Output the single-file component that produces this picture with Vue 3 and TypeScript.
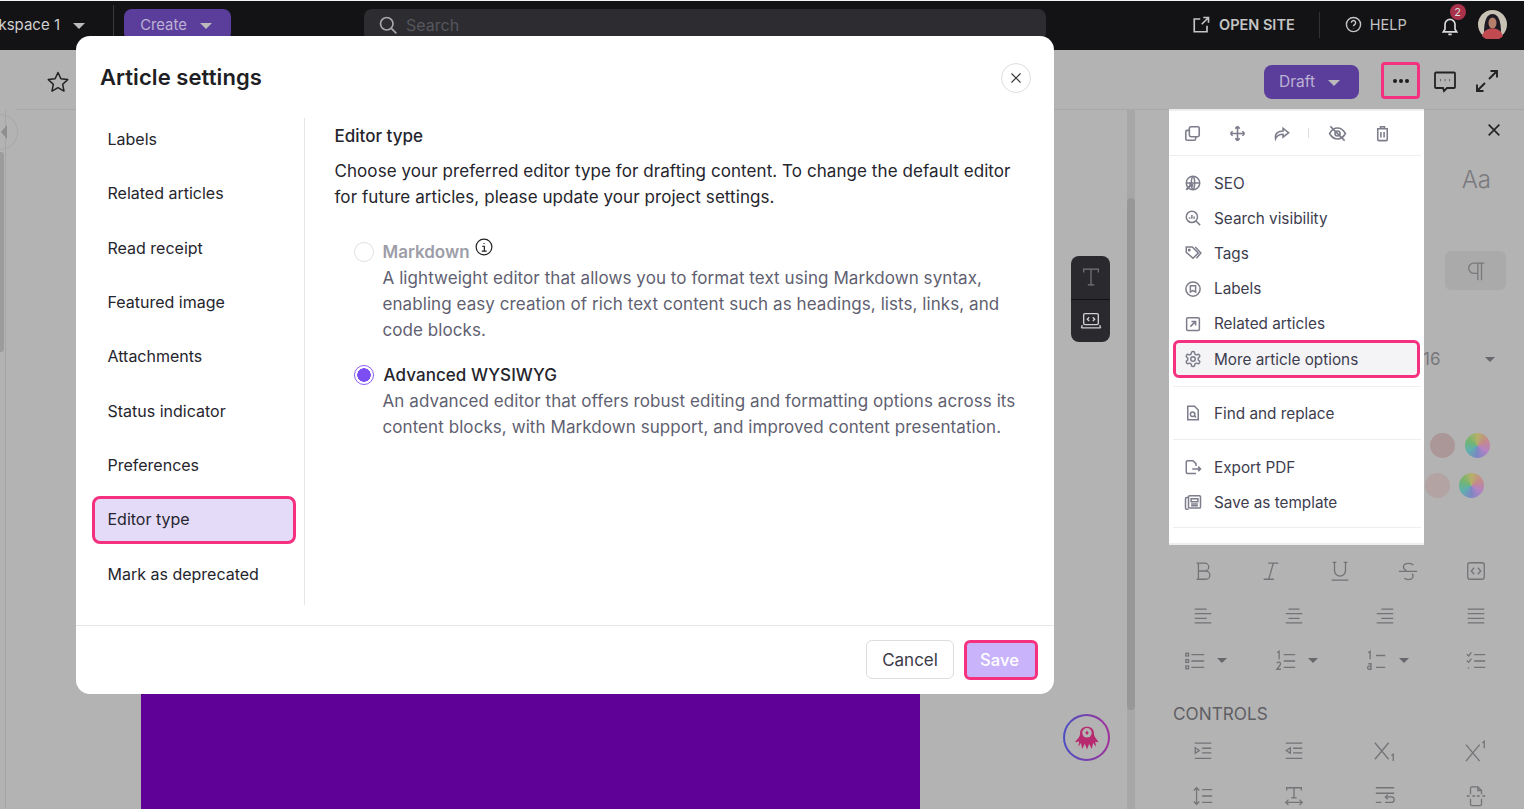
<script setup lang="ts">
const icons: Record<string, string> = {
  copy: '<rect x="8" y="3.5" width="12.5" height="12.5" rx="2"/><path d="M8 8H5.5a2 2 0 0 0-2 2v8.500a2 2 0 0 0 2 2H14a2 2 0 0 0 2-2V16"/>',
  move: '<path d="M12 3v18M3 12h18M12 3 9.200 5.800M12 3l2.800 2.800M12 21l-2.800-2.800M12 21l2.800-2.800M3 12l2.800-2.800M3 12l2.800 2.800M21 12l-2.800-2.800M21 12l-2.800 2.800"/>',
  share: '<path d="M14 5.500 21 11l-7 5.500V13c-4.500 0-7.500 1-9.500 5.500C3.500 12 7.500 8.800 14 8.800z"/>',
  eyeoff: '<path d="M2 12s4-7 10-7 10 7 10 7-4 7-10 7-10-7-10-7z"/><circle cx="12" cy="12" r="3.200"/><path d="M3 3l18 18"/>',
  trash: '<path d="M5 6h14M9.500 6V3.500h5V6M6 6v13.500a1.500 1.500 0 0 0 1.500 1.500h9a1.500 1.500 0 0 0 1.500-1.500V6M10 10v7M14 10v7"/>',
  globe: '<circle cx="12" cy="12" r="9"/><path d="M3 12h18M12 3c-3 3-3 15 0 18M12 3c3 3 3 15 0 18"/><path d="M3 21l8-8M11 13h-4M11 13v4" stroke-width="2.800"/>',
  visibility: '<circle cx="10.500" cy="10.500" r="7.500"/><path d="M16 16l5.500 5.500M7.500 13v-2M10.500 13V8M13.500 13v-3"/>',
  tag: '<path d="M3 4h8l8 8-7 7-9-8z"/><path d="M15 4l7.500 8-6 7"/><circle cx="7" cy="8" r="1"/>',
  label: '<circle cx="12" cy="12" r="9.500"/><path d="M8.500 7.500h7V16L12 14l-3.500 2z"/>',
  related: '<rect x="3.500" y="3.500" width="17" height="17" rx="1.500"/><path d="M8.500 15.500l7-7M10 8.500h5.500V14"/>',
  gear: '<path d="M12.220 2h-.44a2 2 0 0 0-2 2v.18a2 2 0 0 1-1 1.730l-.43.25a2 2 0 0 1-2 0l-.15-.08a2 2 0 0 0-2.730.73l-.22.38a2 2 0 0 0 .73 2.730l.15.1a2 2 0 0 1 1 1.720v.51a2 2 0 0 1-1 1.740l-.15.09a2 2 0 0 0-.73 2.730l.22.38a2 2 0 0 0 2.730.73l.15-.08a2 2 0 0 1 2 0l.43.25a2 2 0 0 1 1 1.730V20a2 2 0 0 0 2 2h.44a2 2 0 0 0 2-2v-.18a2 2 0 0 1 1-1.730l.43-.25a2 2 0 0 1 2 0l.15.08a2 2 0 0 0 2.730-.73l.22-.39a2 2 0 0 0-.73-2.730l-.15-.08a2 2 0 0 1-1-1.740v-.5a2 2 0 0 1 1-1.740l.15-.09a2 2 0 0 0 .73-2.730l-.22-.38a2 2 0 0 0-2.730-.73l-.15.08a2 2 0 0 1-2 0l-.43-.25a2 2 0 0 1-1-1.730V4a2 2 0 0 0-2-2z"/><circle cx="12" cy="12" r="3"/>',
  find: '<path d="M5 3h9l5 5v13H5z"/><circle cx="11.500" cy="13.500" r="3"/><path d="M13.500 15.500 16 18"/>',
  exportpdf: '<path d="M16 20.500H5a2 2 0 0 1-2-2v-13a2 2 0 0 1 2-2h7l4 4v3"/><path d="M11 14.500h11M19 11.500l3 3-3 3"/>',
  template: '<rect x="6" y="3.500" width="16" height="16.500" rx="1.500"/><path d="M6 6H3.500a1.500 1.500 0 0 0-1.500 1.500V20a1.500 1.500 0 0 0 1.500 1.500H6M9.500 7.500h9v4h-9zM9.500 14.500h9M9.500 17h9"/>',
  bold: '<path d="M5 3.500h9a4.200 4.200 0 0 1 0 8.500H7h8a4.500 4.500 0 0 1 0 9H5M7 3.500V21"/>',
  italic: '<path d="M9 3.500h11M4 21h11M14.500 3.500 9.500 21"/>',
  underline: '<path d="M4 2.500h4M16 2.500h4M6 2.500v9a6 6 0 0 0 12 0v-9M3 22h18"/>',
  strike: '<path d="M2 12.500h20M18 5.500C16 3 8 2.500 7 7c-.3 2 1 3.500 3.500 5M8 20c2.500 2 9 2 9.500-2 .1-1-.2-2-1-3"/>',
  codebox: '<rect x="3" y="3" width="18" height="18" rx="2.500"/><path d="M10 8.500 6.800 12l3.200 3.500M14 8.500l3.200 3.500-3.200 3.500"/>',
  left: '<path d="M3 4.500h13M3 9.500h18M3 14.500h13M3 19.500h18"/>',
  center: '<path d="M6 4.500h12M3 9.500h18M6 14.500h12M3 19.500h18"/>',
  right: '<path d="M8 4.500h13M3 9.500h18M8 14.500h13M3 19.500h18"/>',
  justify: '<path d="M3 4.500h18M3 9.500h18M3 14.500h18M3 19.500h18"/>',
  bullets: '<rect x="2" y="3.500" width="3" height="3"/><rect x="2" y="10.500" width="3" height="3"/><rect x="2" y="17.500" width="3" height="3"/><path d="M8 5h14M8 12h14M8 19h14"/>',
  numbers: '<path d="M2.500 3 4.500 1.500v8.500M2 14.500c1-2 4.500-1.500 4 1-.3 1.500-2.500 3-4 5.500h4.500M9.500 5h12.500M9.500 12h12.500M9.500 19h12.500"/>',
  alpha: '<path d="M2.500 3 4.500 1.500v8.500M11 6h10M2.500 15h3v6h-2a1.500 1.500 0 0 1 0-3.500h2M11 19h10"/>',
  checks: '<path d="M2 4.500l2 2 3-4M2 11.500l2 2 3-4M3 19.500h1.500M10 5h12M10 12h12M10 19h12"/>',
  indent: '<path d="M3 3.500h18M11 9h10M11 14h10M3 20h18M3.500 8.500 8 11.500l-4.500 3z"/>',
  outdent: '<path d="M3 3.500h18M11 9h10M11 14h10M3 20h18M8 8.500 3.500 11.500 8 14.500z"/>',
  sub: '<path d="M1 3l15 18M16 3 1 21M19 17l2-1.500V23"/>',
  sup: '<path d="M1 5l15 18M16 5 1 23M19 3l2-1.500V9"/>',
  lineheight: '<path d="M5 3v18M2 6l3-3 3 3M2 18l3 3 3-3M11 5h11M11 12h11M11 19h11"/>',
  textwidth: '<path d="M4 6V3h16v3M12 3v11M9 14h6M3 19h18M6 16l-3 3 3 3M18 16l3 3-3 3"/>',
  wrap: '<path d="M2 3h20M2 9h20M2 19h6M12 19h7a3 3 0 0 0 0-6h-6M15 10.500 12.500 13l2.500 2.500"/>',
  pagebreak: '<path d="M6 10V3.500a1.500 1.500 0 0 1 1.500-1.500H14l4 4v4M14 2v4h4M2 12h3M8 12h3M13 12h3M19 12h3M6 15v6a1.500 1.500 0 0 0 1.500 1.500h9A1.500 1.500 0 0 0 18 21v-6"/>',
}

const navItems = [
  'Labels',
  'Related articles',
  'Read receipt',
  'Featured image',
  'Attachments',
  'Status indicator',
  'Preferences',
  'Editor type',
  'Mark as deprecated',
]

const menuGroups = [
  [
    { icon: 'globe', text: 'SEO' },
    { icon: 'visibility', text: 'Search visibility' },
    { icon: 'tag', text: 'Tags' },
    { icon: 'label', text: 'Labels' },
    { icon: 'related', text: 'Related articles' },
    { icon: 'gear', text: 'More article options', active: true },
  ],
  [{ icon: 'find', text: 'Find and replace' }],
  [
    { icon: 'exportpdf', text: 'Export PDF' },
    { icon: 'template', text: 'Save as template' },
  ],
]

const formatRow = ['bold', 'italic', 'underline', 'strike', 'codebox']
const alignRow = ['left', 'center', 'right', 'justify']
const listRow = [
  { icon: 'bullets', caret: true },
  { icon: 'numbers', caret: true },
  { icon: 'alpha', caret: true },
  { icon: 'checks', caret: false },
]
const controlsRow = ['indent', 'outdent', 'sub', 'sup']
const lastRow = ['lineheight', 'textwidth', 'wrap', 'pagebreak']
</script>

<template>
  <div class="app">
    <header class="topbar">
      <div class="workspace">
        <span>Workspace 1</span>
        <i class="caret light"></i>
      </div>
      <button class="create">Create <i class="caret light"></i></button>
      <div class="search">
        <svg width="20" height="20" viewBox="0 0 24 24" fill="none" stroke="#a8a8a8" stroke-width="2"><circle cx="10.5" cy="10.5" r="7.5"/><path d="M16 16l6 6"/></svg>
        <span>Search</span>
      </div>
      <a class="open-site">
        <svg width="18" height="18" viewBox="0 0 24 24" fill="none" stroke="#c4c4c4" stroke-width="2.2"><path d="M20 13v8H3V4h8M13 11 22 2M15 2h7v7"/></svg>
        OPEN SITE
      </a>
      <span class="bar-divider"></span>
      <a class="help">
        <svg width="17" height="17" viewBox="0 0 24 24" fill="none" stroke="#c4c4c4" stroke-width="2"><circle cx="12" cy="12" r="10"/><path d="M9 9.5a3 3 0 1 1 4.500 2.600c-1 .6-1.500 1.200-1.500 2.400M12 17.500v.5"/></svg>
        HELP
      </a>
      <div class="bell">
        <svg width="20" height="20" viewBox="0 0 24 24" fill="none" stroke="#dadada" stroke-width="2"><path d="M6 16V10a6 6 0 0 1 12 0v6l2 3H4zM10 22h4"/></svg>
        <span class="badge">2</span>
      </div>
      <svg class="avatar" width="29" height="29" viewBox="0 0 29 29">
        <circle cx="14.5" cy="14.5" r="14.5" fill="#c8c2b4"/>
        <path d="M6 23C6 10 9 4 14.500 4S23 10 23 23z" fill="#1d1a24"/>
        <ellipse cx="14.5" cy="13" rx="4" ry="5.5" fill="#b4806c"/>
        <path d="M4 26c2-6 6-7.500 10.500-7.500S23 20 25 26a14.500 14.500 0 0 1-21 0z" fill="#c04a50"/>
      </svg>
    </header>

    <div class="subbar">
      <svg class="star" width="24" height="24" viewBox="0 0 24 24" fill="none" stroke="#222" stroke-width="1.5" stroke-linejoin="round"><path d="M12 2.500l2.900 6.300 6.800.8-5 4.700 1.300 6.800-6-3.400-6 3.400 1.300-6.800-5-4.700 6.800-.8z"/></svg>
      <button class="draft">Draft <i class="caret light"></i></button>
      <button class="dots"><i></i><i></i><i></i></button>
      <svg class="comment" width="24" height="24" viewBox="0 0 24 24" fill="none" stroke="#222" stroke-width="1.8"><path d="M3 3.500h18a1 1 0 0 1 1 1V18a1 1 0 0 1-1 1h-7l-3 3-1-3H3a1 1 0 0 1-1-1V4.500a1 1 0 0 1 1-1z"/><path d="M7.500 11.200h.5M11.800 11.200h.5M16 11.200h.5" stroke-width="2.2"/></svg>
      <svg class="expand" width="24" height="24" viewBox="0 0 24 24" fill="none" stroke="#222" stroke-width="1.9"><path d="M14 10 22 2M15.500 2H22v6.500M10 14l-8 8M2 15.500V22h6.500"/></svg>
    </div>

    <div class="workarea">
      <div class="rail"><span class="rail-thumb"></span></div>
      <main class="canvas">
        <div class="hero"></div>
      </main>
      <div class="scrollbar"><span></span></div>
      <aside class="panel">
        <svg class="panel-close" width="16" height="16" viewBox="0 0 24 24" fill="none" stroke="#222" stroke-width="2.4"><path d="M4 4l16 16M20 4 4 20"/></svg>
        <div class="aa">Aa</div>
        <div class="pilcrow">
          <svg width="22" height="22" viewBox="0 0 24 24" fill="none" stroke="#77777c" stroke-width="1.4"><path d="M14 3.500V22M18 3.500V22M21 3.500H9.500a5.500 5.500 0 0 0 0 11H14"/></svg>
        </div>
        <div class="size-row"><span>16</span><i class="caret dark"></i></div>
        <div class="swatches first"><i class="dot-a"></i><i class="wheel"></i></div>
        <div class="swatches second"><i class="dot-b"></i><i class="wheel"></i></div>

        <div class="tools five first-tools">
          <svg v-for="name in formatRow" :key="name" class="tool" viewBox="0 0 24 24" v-html="icons[name]"></svg>
        </div>
        <div class="tools four">
          <svg v-for="name in alignRow" :key="name" class="tool" viewBox="0 0 24 24" v-html="icons[name]"></svg>
        </div>
        <div class="tools four">
          <div v-for="item in listRow" :key="item.icon" class="tool-cell" :class="{ 'with-caret': item.caret }">
            <svg class="tool" viewBox="0 0 24 24" v-html="icons[item.icon]"></svg>
            <i v-if="item.caret" class="caret dark"></i>
          </div>
        </div>
        <div class="controls-label">CONTROLS</div>
        <div class="tools four">
          <svg v-for="name in controlsRow" :key="name" class="tool" viewBox="0 0 24 24" v-html="icons[name]"></svg>
        </div>
        <div class="tools four">
          <svg v-for="name in lastRow" :key="name" class="tool" viewBox="0 0 24 24" v-html="icons[name]"></svg>
        </div>
      </aside>
    </div>

    <!-- things floating over the editor -->
    <span class="collapse"></span>
    <div class="float-tools">
      <button>
        <svg width="22" height="22" viewBox="0 0 24 24" fill="none" stroke="#77777c" stroke-width="1.3"><path d="M4 7V3.500h16V7M12 3.500V20.500M8.500 20.500h7"/></svg>
      </button>
      <button>
        <svg width="22" height="22" viewBox="0 0 24 24" fill="none" stroke="#cfcfcf" stroke-width="1.5"><rect x="4" y="4" width="16" height="12" rx="1.5"/><path d="M1.500 19.500h21M2.500 16.500 1.500 19.500M21.500 16.500l1 3M10 8 8 10l2 2M14 8l2 2-2 2"/></svg>
      </button>
    </div>
    <div class="bot">
      <svg width="26" height="26" viewBox="0 0 30 30" fill="#b72a70">
        <path d="M15 2c5 0 8 3 8 7.500 0 2 .5 3.500 1.500 5l4 5.500-4-.8 1 6-3.500-4.500-1.500 7-3-6-2.500 6.500-2.500-6.500-3 6-1.500-7L5 25l1-6-5 1 4.500-5.500C6.500 13 7 11.500 7 9.500 7 5 10 2 15 2z"/>
        <circle cx="15" cy="9" r="5.500" fill="#b3b3b3"/>
        <path d="M8.500 9H13l2-2.500L17 9h4.500M15 11.500 13 9h4z"/>
      </svg>
    </div>

    <div class="menu">
      <div class="menu-tools">
        <svg class="m-tool first" viewBox="0 0 24 24" v-html="icons.copy"></svg>
        <svg class="m-tool" viewBox="0 0 24 24" v-html="icons.move"></svg>
        <svg class="m-tool" viewBox="0 0 24 24" v-html="icons.share"></svg>
        <span class="m-sep"></span>
        <svg class="m-tool" viewBox="0 0 24 24" v-html="icons.eyeoff"></svg>
        <svg class="m-tool" viewBox="0 0 24 24" v-html="icons.trash"></svg>
      </div>
      <div v-for="(group, i) in menuGroups" :key="i" class="menu-group">
        <div v-for="item in group" :key="item.text" class="menu-item" :class="{ active: item.active }">
          <svg class="m-icon" viewBox="0 0 24 24" v-html="icons[item.icon]"></svg>
          <span>{{ item.text }}</span>
        </div>
      </div>
      <div class="menu-end"></div>
    </div>

    <section class="modal">
      <div class="modal-head">
        <h2>Article settings</h2>
        <button class="modal-close">
          <svg width="12" height="12" viewBox="0 0 24 24" fill="none" stroke="#333" stroke-width="2.2"><path d="M3 3l18 18M21 3 3 21"/></svg>
        </button>
      </div>
      <div class="modal-body">
        <nav class="nav">
          <a v-for="item in navItems" :key="item" class="nav-item" :class="{ selected: item === 'Editor type' }">{{ item }}</a>
        </nav>
        <div class="content">
          <h3>Editor type</h3>
          <p class="intro">Choose your preferred editor type for drafting content. To change the default editor for future articles, please update your project settings.</p>
          <div class="option disabled">
            <span class="radio"></span>
            <div>
              <div class="opt-label">
                <span>Markdown</span>
                <svg class="info" width="18" height="18" viewBox="0 0 24 24" fill="none" stroke="#222" stroke-width="1.6"><circle cx="12" cy="12" r="10.5"/><path d="M12 6.500v1.500M9.500 11H12.500v6.500M9 17.500h6.500"/></svg>
              </div>
              <p>A lightweight editor that allows you to format text using Markdown syntax, enabling easy creation of rich text content such as headings, lists, links, and code blocks.</p>
            </div>
          </div>
          <div class="option">
            <span class="radio checked"></span>
            <div>
              <div class="opt-label">Advanced WYSIWYG</div>
              <p>An advanced editor that offers robust editing and formatting options across its content blocks, with Markdown support, and improved content presentation.</p>
            </div>
          </div>
        </div>
      </div>
      <div class="modal-foot">
        <button class="cancel">Cancel</button>
        <button class="save">Save</button>
      </div>
    </section>
  </div>
</template>

<style>
body {
  background: #fff;
}
</style>

<style scoped>
.app {
  position: relative;
  width: 1524px;
  height: 809px;
  overflow: hidden;
  display: flex;
  flex-direction: column;
  background: #b3b3b3;
  font-family: Inter, "Liberation Sans", sans-serif;
  border-top: 1px solid #f2f2f2;
  box-sizing: border-box;
}
button {
  font-family: inherit;
  border: none;
}
.caret {
  display: inline-block;
  width: 0;
  height: 0;
  border-left: 6px solid transparent;
  border-right: 6px solid transparent;
  border-top: 6px solid #bbb;
}
.caret.light {
  margin-top: 3px;
}
.caret.dark {
  border-left-width: 5px;
  border-right-width: 5px;
  border-top: 5px solid #68686c;
}

.topbar {
  height: 49px;
  flex: none;
  display: flex;
  align-items: center;
  box-sizing: border-box;
  padding-bottom: 2px;
  background: #131316;
  color: #c4c4c4;
  font-size: 14.5px;
}
.workspace {
  width: 114px;
  height: 40px;
  flex: none;
  display: flex;
  align-items: center;
  justify-content: flex-end;
  gap: 13px;
  padding-right: 28px;
  box-sizing: border-box;
  border-right: 1px solid #3a3a3d;
  white-space: nowrap;
  color: #d0d0d0;
  font-size: 15px;
}
.create {
  margin-left: 10px;
  width: 107px;
  height: 32px;
  flex: none;
  padding: 0 3px 0 0;
  background: #5b3e9b;
  color: #bcb2d4;
  font-size: 14.8px;
  border-radius: 8px;
  display: flex;
  align-items: center;
  justify-content: center;
  gap: 13px;
}
.search {
  margin-left: 133px;
  width: 682px;
  height: 32px;
  flex: none;
  background: #2c2c31;
  border-radius: 8px;
  display: flex;
  align-items: center;
  gap: 8px;
  padding-left: 14px;
  box-sizing: border-box;
  color: #56565c;
  font-size: 16px;
}
.open-site {
  margin-left: 146px;
  display: flex;
  align-items: center;
  gap: 9px;
  font-weight: 600;
  white-space: nowrap;
}
.bar-divider {
  width: 1px;
  height: 26px;
  background: #323235;
  margin-left: 24px;
}
.help {
  margin-left: 25px;
  display: flex;
  align-items: center;
  gap: 8px;
}
.bell {
  position: relative;
  margin: 3px 0 0 33px;
  width: 20px;
  height: 20px;
}
.badge {
  position: absolute;
  left: 10px;
  top: -12px;
  width: 16px;
  height: 16px;
  border-radius: 50%;
  background: #a8324a;
  color: #ddd;
  font-size: 11px;
  line-height: 16px;
  text-align: center;
}
.avatar {
  margin-left: 18px;
}

.subbar {
  height: 60px;
  flex: none;
  display: flex;
  align-items: center;
  box-sizing: border-box;
  padding-top: 5px;
  border-bottom: 1px solid #a8a8a8;
  margin-left: 16px;
}
.star {
  margin-left: 30px;
}
.draft {
  margin-left: 1194px;
  width: 95px;
  height: 34px;
  padding: 0 4px 1px 0;
  background: #5b3e9b;
  color: #bcb2d4;
  font-size: 15.5px;
  border-radius: 8px;
  display: flex;
  align-items: center;
  justify-content: center;
  gap: 13px;
}
.dots {
  margin: -3px 0 0 22px;
  width: 39px;
  height: 37px;
  background: transparent;
  border: 3px solid #f5317f;
  border-radius: 4px;
  display: flex;
  align-items: center;
  justify-content: center;
  gap: 2px;
  padding: 0;
}
.dots i {
  width: 4px;
  height: 4px;
  border-radius: 50%;
  background: #1d1d20;
}
.comment {
  margin: -2px 0 0 13px;
}
.expand {
  margin: -2px 0 0 18px;
}

.workarea {
  flex: 1;
  min-height: 0;
  display: flex;
}
.rail {
  width: 6px;
  flex: none;
  box-sizing: border-box;
  border-right: 1px solid #a6a6a6;
  padding-top: 42px;
}
.rail-thumb {
  display: block;
  width: 4px;
  height: 200px;
  background: #9c9c9c;
  border-radius: 0 3px 3px 0;
}
.canvas {
  width: 1121px;
  flex: none;
  display: flex;
  flex-direction: column;
  justify-content: flex-end;
}
.hero {
  margin-left: 135px;
  width: 779px;
  height: 300px;
  background: #5f0097;
}
.scrollbar {
  width: 8px;
  flex: none;
  background: #a7a7a7;
  padding-top: 88px;
  box-sizing: border-box;
}
.scrollbar span {
  display: block;
  height: 512px;
  background: #989898;
  border-radius: 4px;
}
.panel {
  flex: 1;
  min-width: 0;
  display: flex;
  flex-direction: column;
  padding: 0 32px 0 38px;
  color: #6d6d72;
}
.panel-close {
  flex: none;
  align-self: flex-end;
  margin: 12px -10px 0 0;
}
.aa {
  align-self: flex-end;
  margin: 27px 1px 0 0;
  line-height: 30px;
  font-size: 24px;
  font-weight: 300;
  color: #7a7a7e;
}
.pilcrow {
  align-self: flex-end;
  margin: 56px -14px 0 0;
  width: 61px;
  height: 39px;
  flex: none;
  background: #aaaaaa;
  border-radius: 6px;
  display: flex;
  align-items: center;
  justify-content: center;
}
.size-row {
  align-self: flex-end;
  margin: 57px -3px 0 0;
  width: 72px;
  height: 24px;
  flex: none;
  display: flex;
  justify-content: space-between;
  align-items: center;
  font-size: 17px;
  color: #77777b;
}
.swatches {
  align-self: flex-end;
  display: flex;
  gap: 10px;
  flex: none;
}
.swatches i {
  width: 25px;
  height: 25px;
  border-radius: 50%;
}
.swatches.first {
  margin: 62px 2.5px 0 0;
}
.swatches.second {
  margin: 15px 8.5px 0 0;
  gap: 9px;
}
.dot-a {
  background: #ab9797;
}
.dot-b {
  background: #b3a3a3;
}
.wheel {
  background: conic-gradient(#b7b06a, #c48a8a, #b583c2, #7f86c4, #5fb0ae, #74b56f, #b7b06a);
}
.tools {
  flex: none;
  display: grid;
  height: 45px;
  align-items: center;
  justify-items: center;
}
.five {
  grid-template-columns: repeat(5, 68.25px);
  margin-left: -4px;
}
.four {
  grid-template-columns: repeat(4, 91px);
  margin-left: -15.5px;
}
.first-tools {
  margin-top: 50px;
}
.tool {
  width: 22px;
  height: 22px;
  fill: none;
  stroke: #737378;
  stroke-width: 1.4;
}
.tool-cell {
  display: flex;
  align-items: center;
  gap: 11px;
}
.tool-cell.with-caret {
  margin-left: 4px;
}
.controls-label {
  margin-top: 19.5px;
  height: 22px;
  line-height: 22px;
  font-size: 17.2px;
  color: #5f5f63;
  margin-bottom: 3.5px;
  flex: none;
}

.collapse {
  position: absolute;
  left: -18px;
  top: 113px;
  width: 36px;
  height: 36px;
  box-sizing: border-box;
  border: 1px solid #a8a8a8;
  border-radius: 50%;
}
.collapse::after {
  content: "";
  position: absolute;
  left: 18px;
  top: 10px;
  border-top: 7px solid transparent;
  border-bottom: 7px solid transparent;
  border-right: 6px solid #8f8f8f;
}
.float-tools {
  position: absolute;
  left: 1071px;
  top: 255px;
  width: 39px;
  height: 86px;
  background: #29292e;
  border-radius: 8px;
  display: flex;
  flex-direction: column;
}
.float-tools button {
  flex: 1;
  background: transparent;
  padding: 0;
  display: flex;
  align-items: center;
  justify-content: center;
}
.float-tools button + button {
  border-top: 1px solid #131316;
}
.bot {
  position: absolute;
  left: 1063px;
  top: 713px;
  width: 47px;
  height: 47px;
  box-sizing: border-box;
  border-radius: 50%;
  border: 2.5px solid transparent;
  background: linear-gradient(#b3b3b3, #b3b3b3) padding-box, linear-gradient(90deg, #4a4fc4, #a0309a) border-box;
  display: flex;
  align-items: center;
  justify-content: center;
}

.menu {
  position: absolute;
  left: 1169px;
  top: 108px;
  width: 255px;
  height: 436px;
  background: #fff;
  border-top: 2px solid #eee;
  box-sizing: border-box;
  display: flex;
  flex-direction: column;
  color: #3d3d4e;
  font-size: 15.3px;
}
.menu-tools {
  height: 45px;
  flex: none;
  display: flex;
  align-items: center;
  gap: 25.5px;
  margin: 0 3px 0 1px;
  box-sizing: border-box;
  border-bottom: 1px solid #eee;
}
.m-tool {
  width: 19px;
  height: 19px;
  fill: none;
  stroke: #7d7d8c;
  stroke-width: 2;
}
.m-tool.first {
  margin-left: 13px;
}
.m-sep {
  width: 1px;
  height: 10px;
  background: #ddd;
  margin: 0 -6px 0 -9px;
}
.menu-group {
  margin: 0 3px 0 4px;
  padding: 9.5px 0 7.5px;
  border-bottom: 1px solid #eee;
  flex: none;
}
.menu-group:nth-child(2) {
  padding-bottom: 9.3px;
}
.menu-group:nth-child(3) {
  padding: 8.5px 0 8.5px;
}
.menu-item {
  height: 35.2px;
  display: flex;
  align-items: center;
  gap: 12px;
  padding-left: 10px;
  box-sizing: border-box;
  margin: 0 2px 0 1px;
}
.menu-item.active {
  background: #f4f4f7;
  outline: 3px solid #f5317f;
  outline-offset: -2px;
  border-radius: 5px;
}
.m-icon {
  width: 18px;
  height: 18px;
  flex: none;
  fill: none;
  stroke: #7d7d8c;
  stroke-width: 2;
}
.menu-end {
  margin-top: auto;
  height: 2px;
  background: #eee;
}

.modal {
  position: absolute;
  left: 76px;
  top: 35px;
  width: 978px;
  height: 658px;
  background: #fff;
  border-radius: 14px;
  display: flex;
  flex-direction: column;
}
.modal-head {
  height: 82px;
  flex: none;
  display: flex;
  align-items: center;
  justify-content: space-between;
  padding: 0 23px 0 24px;
  box-sizing: border-box;
}
.modal-head h2 {
  margin: 0;
  font-size: 22px;
  font-weight: 600;
  letter-spacing: 0.07px;
  color: #1e1e24;
}
.modal-close {
  width: 30px;
  height: 30px;
  margin-top: 1px;
  border-radius: 50%;
  background: #fff;
  border: 1px solid #dedede;
  display: flex;
  align-items: center;
  justify-content: center;
  padding: 0;
}
.modal-body {
  height: 487px;
  flex: none;
  display: flex;
}
.nav {
  width: 213px;
  margin-left: 16px;
  padding-right: 8px;
  box-sizing: border-box;
  border-right: 1px solid #e6e6e6;
  display: flex;
  flex-direction: column;
  gap: 6.35px;
}
.nav-item {
  height: 48px;
  flex: none;
  display: flex;
  align-items: center;
  padding-left: 15.5px;
  font-size: 16px;
  color: #25252d;
  border-radius: 8px;
  box-sizing: border-box;
  position: relative;
  top: -3px;
}
.nav-item.selected {
  top: -2px;
  background: #e4dbf9;
  border: 3px solid #f5317f;
  padding: 0 0 2px 12.5px;
}
.content {
  flex: 1;
  min-width: 0;
  padding: 6px 30px 0 29.5px;
  font-size: 17px;
  line-height: 26px;
  letter-spacing: 0.07px;
}
.content h3 {
  margin: 0;
  font-size: 17px;
  line-height: 24px;
  font-weight: 500;
  letter-spacing: 0;
  color: #25252d;
}
.intro {
  margin: 10px 0 0;
  color: #25252d;
}
.option {
  display: flex;
  gap: 9px;
  padding-left: 19px;
  margin-top: 19px;
  color: #5f5f71;
}
.option.disabled {
  margin-top: 28px;
}
.option p {
  margin: 0;
}
.radio {
  flex: none;
  width: 20px;
  height: 20px;
  margin-top: 3px;
  box-sizing: border-box;
  border-radius: 50%;
  border: 1.5px solid #e2e2e6;
}
.disabled .radio {
  margin-top: 4px;
}
.radio.checked {
  border-color: #8b5cf6;
  background: radial-gradient(circle, #7c4df0 0 6.5px, #fff 7px);
}
.opt-label {
  font-weight: 500;
  color: #25252d;
  margin-left: 1px;
}
.disabled .opt-label {
  display: flex;
  align-items: flex-start;
  gap: 5px;
  height: 27px;
  color: #9d9da8;
  font-weight: 600;
  line-height: 28px;
  letter-spacing: 0;
  margin-left: 0;
}
.info {
  flex: none;
}
.modal-foot {
  margin-top: 20px;
  flex: 1;
  display: flex;
  justify-content: flex-end;
  align-items: flex-start;
  gap: 10px;
  padding: 14px 16px 0;
  border-top: 1px solid #e6e6e6;
}
.cancel {
  width: 88px;
  height: 39px;
  background: #fff;
  border: 1px solid #ddd;
  border-radius: 6px;
  font-size: 17px;
  color: #3a3a48;
}
.save {
  width: 74px;
  height: 40px;
  background: #c9b3fb;
  border: 3px solid #f5317f;
  border-radius: 6px;
  color: #fff;
  font-size: 16.6px;
  font-weight: 500;
  padding: 0 3px 0 0;
}
</style>
